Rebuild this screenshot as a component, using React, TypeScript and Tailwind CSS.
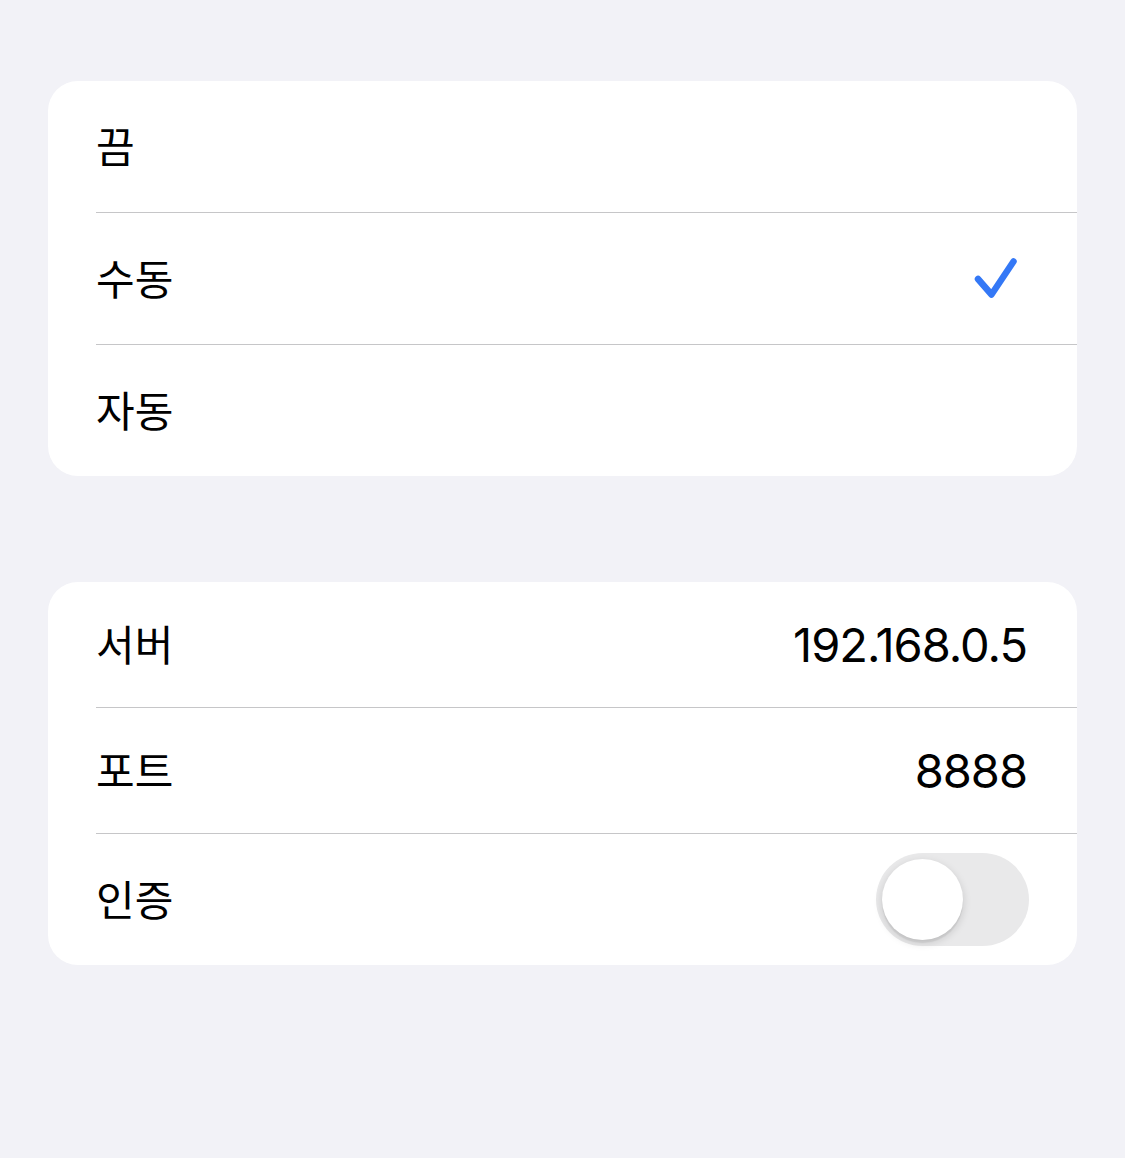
import React from "react"

const label = "pb-[4px] text-[42px] text-black leading-none [font-family:'Noto_Sans_CJK_KR',sans-serif]"
const value = "text-[47px] text-black leading-none tracking-[-1px] [font-family:Inter,'Noto_Sans_CJK_KR',sans-serif]"

function Check() {
  return (
    <svg width="48" height="48" viewBox="0 0 48 48" className="mr-[58px]">
      <path
        d="M7 24 L20.5 39.5 L42.5 6.5"
        fill="none"
        stroke="#3478f6"
        strokeWidth={6.5}
        strokeLinecap="round"
        strokeLinejoin="round"
      />
    </svg>
  )
}

function Toggle() {
  return (
    <div className="mr-[48px] h-[93px] w-[153px] rounded-full bg-[#e9e9ea] p-[6px]">
      <div className="h-[81px] w-[81px] rounded-full bg-white shadow-[0_3px_8px_rgba(0,0,0,0.15),0_3px_1px_rgba(0,0,0,0.06)]" />
    </div>
  )
}

export default function App() {
  return (
    <div className="min-h-[1158px] bg-[#f2f2f7] px-[48px] pt-[81px]">
      {/* mode */}
      <div className="overflow-hidden rounded-[30px] bg-white">
        <div className="pl-[48px]">
          <div className="flex h-[132px] items-center border-b border-[#c6c6c8]">
            <span className={label}>끔</span>
          </div>
          <div className="flex h-[132px] items-center justify-between border-b border-[#c6c6c8]">
            <span className={label}>수동</span>
            <Check />
          </div>
          <div className="flex h-[131px] items-center">
            <span className={label}>자동</span>
          </div>
        </div>
      </div>

      {/* proxy */}
      <div className="mt-[106px] overflow-hidden rounded-[30px] bg-white">
        <div className="pl-[48px]">
          <div className="flex h-[126px] items-center justify-between border-b border-[#c6c6c8]">
            <span className={label}>서버</span>
            <span className={value + " mr-[50px]"}>192.168.0.5</span>
          </div>
          <div className="flex h-[126px] items-center justify-between border-b border-[#c6c6c8]">
            <span className={label}>포트</span>
            <span className={value + " mr-[50px]"}>8888</span>
          </div>
          <div className="flex h-[131px] items-center justify-between">
            <span className={label}>인증</span>
            <Toggle />
          </div>
        </div>
      </div>
    </div>
  )
}
